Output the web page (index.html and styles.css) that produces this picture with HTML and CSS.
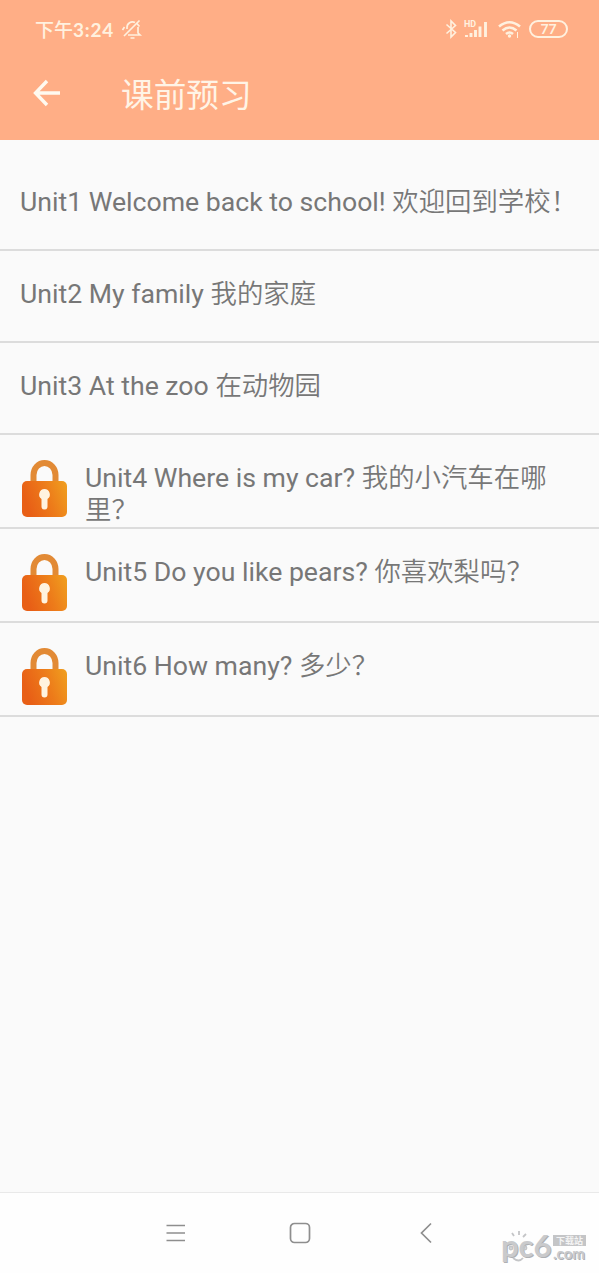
FILE: index.html
```html
<!DOCTYPE html>
<html lang="zh-CN">
<head>
<meta charset="utf-8">
<title>课前预习</title>
<link rel="stylesheet" href="styles.css">
</head>
<body>
<div class="screen">
  <header class="header">
    <div class="status">
      <span class="clock">下午<b>3:24</b></span>
      <svg class="mute" width="22" height="22" viewBox="0 0 22 22"><path d="M6 11V9.500a5.500 5.500 0 0 1 8-5M17 9v6l2 2H7M9.500 20h4M18.500 2.500L3 18M15.500 5l3 3.500M3.500 9L1.500 12"/></svg>
      <div class="indicators">
        <svg class="bluetooth" width="12" height="20" viewBox="0 0 12 20"><path d="M1.500 5.500l9 8L6 18V2l4.500 4.500-9 8"/></svg>
        <svg class="signal" width="25" height="20" viewBox="0 0 25 20"><text x="0" y="8">HD</text><path d="M2.500 18v-2M7 18v-4M11.500 18v-7M16 18V7.500M21.500 18V3"/></svg>
        <svg class="wifi" width="26" height="20" viewBox="0 0 26 20"><path d="M2 7.500q10.500-8.500 21 0M5.500 11.500q7-6 14 0M9 15q3.500-3 7 0"/><circle cx="12.500" cy="17" r="1.700"/><path class="wifi-link" d="M20.500 13v6"/></svg>
        <span class="battery">77</span>
      </div>
    </div>
    <div class="titlebar">
      <svg class="back" width="28" height="28" viewBox="0 0 28 28"><path d="M27 14H3M14 2L2.500 14 14 26"/></svg>
      <h1 class="title">课前预习</h1>
    </div>
  </header>
  <main class="list">
    <div class="row first"><p>Unit1 Welcome back to school! <span class="zh">欢迎回到学校！</span></p></div>
    <div class="row"><p>Unit2 My family <span class="zh">我的家庭</span></p></div>
    <div class="row"><p>Unit3 At the zoo <span class="zh">在动物园</span></p></div>
    <div class="row locked">
      <svg class="lock" width="50" height="62" viewBox="0 0 50 62"><defs><linearGradient id="lock-fill" x1="0" x2="1" y1=".3" y2="0"><stop offset="0" stop-color="#e85f16"/><stop offset=".5" stop-color="#ed7b1a"/><stop offset="1" stop-color="#f0a01f"/></linearGradient></defs><path class="shackle" d="M13.500 25V17a11 12 0 0 1 22 0v8"/><rect x="2" y="23" width="45" height="36" rx="5" fill="url(#lock-fill)"/><path class="keyhole" d="M24.500 31a5.500 5.500 0 0 1 3 10v7.500a3 3 0 0 1-6 0V41a5.500 5.500 0 0 1 3-10z"/></svg>
      <p>Unit4 Where is my car? <span class="zh">我的小汽车在哪里？</span></p>
    </div>
    <div class="row locked">
      <svg class="lock" width="50" height="62" viewBox="0 0 50 62"><path class="shackle" d="M13.500 25V17a11 12 0 0 1 22 0v8"/><rect x="2" y="23" width="45" height="36" rx="5" fill="url(#lock-fill)"/><path class="keyhole" d="M24.500 31a5.500 5.500 0 0 1 3 10v7.500a3 3 0 0 1-6 0V41a5.500 5.500 0 0 1 3-10z"/></svg>
      <p>Unit5 Do you like pears? <span class="zh">你喜欢梨吗？</span></p>
    </div>
    <div class="row locked">
      <svg class="lock" width="50" height="62" viewBox="0 0 50 62"><path class="shackle" d="M13.500 25V17a11 12 0 0 1 22 0v8"/><rect x="2" y="23" width="45" height="36" rx="5" fill="url(#lock-fill)"/><path class="keyhole" d="M24.500 31a5.500 5.500 0 0 1 3 10v7.500a3 3 0 0 1-6 0V41a5.500 5.500 0 0 1 3-10z"/></svg>
      <p>Unit6 How many? <span class="zh">多少？</span></p>
    </div>
  </main>
  <nav class="navbar">
    <svg width="24" height="24" viewBox="0 0 24 24"><path d="M3.500 4.500h18.500M3.500 12h18.500M3.500 19.500h18.500"/></svg>
    <svg width="24" height="24" viewBox="0 0 24 24"><rect x="1.500" y="2.500" width="19" height="19" rx="4"/></svg>
    <svg width="24" height="24" viewBox="0 0 24 24"><path d="M17 2.500L7.500 12 17 21.500"/></svg>
  </nav>
  <div class="watermark">
    <span class="pc">pc6</span>
    <span class="side"><span class="tag">下载站</span><span class="com">.com</span></span>
    <svg class="face" width="30" height="34" viewBox="0 0 30 34"><path d="M12 5L10 2M17 4V0M21 6l3-3M11 27q6 5 10 0"/><circle cx="9" cy="17" r="1.500"/><circle cx="23" cy="17" r="1.500"/></svg>
  </div>
</div>
</body>
</html>
```

FILE: styles.css
```css
* { box-sizing: border-box; }
body { margin: 0; background: #fafafa; font-family: Roboto, "Noto Sans CJK SC", sans-serif; }
svg { display: block; flex: none; fill: none; }
.screen { position: relative; display: flex; flex-direction: column; width: 599px; height: 1273px; overflow: hidden; }
.header { height: 140px; flex: none; background: #ffae86; color: #fff1df; }
.status { display: flex; align-items: center; height: 58px; padding: 0 31px 0 35px; }
.clock { font: 500 19px/24px "Noto Sans CJK SC", sans-serif; white-space: nowrap; }
.clock b { font: 700 19px/24px Lato, sans-serif; letter-spacing: .8px; }
.mute { margin-left: 7px; stroke: #fff1df; stroke-width: 1.7; }
.indicators { display: flex; align-items: center; margin-left: auto; }
.indicators svg { stroke: #fff1df; }
.bluetooth { stroke-width: 1.6; margin-right: 7px; }
.signal { stroke-width: 2.9; margin-right: 8px; }
.signal text { font: 700 9px Roboto, sans-serif; fill: #fff1df; stroke: none; }
.wifi { stroke-width: 2.6; margin-right: 6px; }
.wifi circle { fill: #fff1df; stroke: none; }
.wifi .wifi-link { stroke-width: 1; }
.battery { width: 39px; height: 18px; border: 2px solid #fff1df; border-radius: 9px; font: 700 14px/14px Lato, sans-serif; text-align: center; }
.titlebar { display: flex; align-items: center; height: 70px; padding-left: 33px; }
.back { stroke: #fffaf0; stroke-width: 3.4; }
.title { margin: 0 0 0 60px; font: 400 32.7px/40px "Noto Sans CJK SC", sans-serif; color: #fff4e6; }
.list { flex: 1; }
.row { display: flex; height: 92px; padding: 27px 10px 0 20px; border-bottom: 2px solid #dcdcdc; color: #777; }
.row.first { height: 111px; padding-top: 46px; }
.row p { margin: 0; font-size: 26.65px; line-height: 32px; }
.zh { font: 350 26.4px/20px "Noto Sans CJK SC", sans-serif; }
.row.locked { height: 94px; padding-right: 40px; }
.row.locked p { margin-left: 15px; }
.lock { margin-top: -4px; }
.shackle { stroke: #e28a35; stroke-width: 6; }
.keyhole { fill: #fff3df; }
.navbar { display: flex; justify-content: space-between; align-items: center; height: 81px; flex: none; padding: 0 161px 0 163px; background: #fefefe; border-top: 1px solid #e9e9e9; }
.navbar svg { stroke: #8e8e8e; stroke-width: 1.7; }
.watermark { position: absolute; left: 501px; top: 1228px; display: flex; color: #c9cacc; text-shadow: 1px 1px 0 #aeb0b3; }
.pc { font: 700 31px/34px Lato, sans-serif; width: 52px; }
.side { display: flex; flex-direction: column; padding-top: 7px; }
.tag { width: 33px; height: 11px; background: #c4c5c7; color: #f4f4f4; font: 700 9px/11px "Noto Sans CJK SC", sans-serif; text-align: center; text-shadow: none; }
.com { font: 700 15px/14px Lato, sans-serif; }
.face { position: absolute; left: 1px; top: 3px; stroke: #c4c5c7; stroke-width: 1.8; }
```
